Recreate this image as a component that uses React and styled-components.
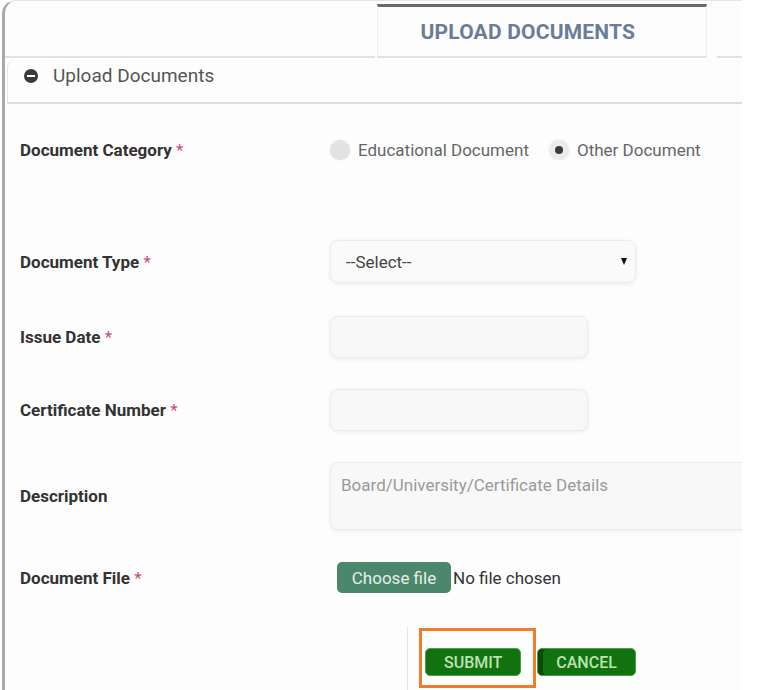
import React from 'react';
import styled, { createGlobalStyle } from 'styled-components';

const GlobalStyle = createGlobalStyle`
  html, body {
    margin: 0;
    padding: 0;
    background: #fff;
    font-family: Roboto, "Liberation Sans", Arial, sans-serif;
  }
`;

const App = () => {
    return (
        <>
            <GlobalStyle />
            <Frame>
                <TopBar>
                    <Gap $w={371} />
                    <Tab>UPLOAD DOCUMENTS</Tab>
                    <Gap $w={25} $ml={10} />
                </TopBar>
                <PanelHeader>
                    <MinusIcon />
                    <span>Upload Documents</span>
                </PanelHeader>
                <Form>
                    <Row $mt={21} $h={50}>
                        <Label>Document Category <Star>*</Star></Label>
                        <Radios>
                            <RadioOption>
                                <Radio />
                                Educational Document
                            </RadioOption>
                            <RadioOption>
                                <Radio $checked />
                                Other Document
                            </RadioOption>
                        </Radios>
                    </Row>
                    <Row $mt={65} $h={43}>
                        <Label>Document Type <Star>*</Star></Label>
                        <SelectBox>
                            <span>--Select--</span>
                            <Caret />
                        </SelectBox>
                    </Row>
                    <Row $mt={33} $h={42}>
                        <Label>Issue Date <Star>*</Star></Label>
                        <Input />
                    </Row>
                    <Row $mt={31} $h={42}>
                        <Label>Certificate Number <Star>*</Star></Label>
                        <Input />
                    </Row>
                    <Row $mt={31} $h={68}>
                        <Label>Description</Label>
                        <TextArea placeholder="Board/University/Certificate Details" />
                    </Row>
                    <Row $mt={32} $h={31}>
                        <Label>Document File <Star>*</Star></Label>
                        <FileField>
                            <ChooseButton>Choose file</ChooseButton>
                            <span>No file chosen</span>
                        </FileField>
                    </Row>
                    <Row $mt={34} $h={70}>
                        <span />
                        <ButtonArea>
                            <Highlight>
                                <ActionButton>SUBMIT</ActionButton>
                            </Highlight>
                            <ActionButton $edge>CANCEL</ActionButton>
                        </ButtonArea>
                    </Row>
                </Form>
            </Frame>
        </>
    );
};

export default App;

// outer card
const Frame = styled.div`
    margin-left: 2px;
    width: 740px;
    height: 690px;
    box-sizing: border-box;
    border-left: 3px solid #a9a9a9;
    border-top: 1px solid #e6e6e6;
    border-top-left-radius: 14px;
    background: #fdfdfd;
    overflow: hidden;
`;

const TopBar = styled.div`
    display: flex;
    height: 57px;
`;

const Gap = styled.div`
    width: ${p => p.$w}px;
    margin-left: ${p => p.$ml || 0}px;
    border-bottom: 2px solid #e1e1e1;
`;

const Tab = styled.div`
    margin-left: 2px;
    margin-top: 3px;
    width: 330px;
    box-sizing: border-box;
    padding-left: 42px;
    display: flex;
    align-items: center;
    border-top: 3px solid #6a6a6a;
    border-left: 1px solid #efefef;
    border-right: 1px solid #efefef;
    border-bottom: 2px solid #e1e1e1;
    color: #6b7c98;
    font-size: 21px;
    font-weight: 700;
    letter-spacing: 0.2px;
`;

const PanelHeader = styled.div`
    margin-left: 2px;
    margin-top: 2px;
    height: 44px;
    box-sizing: border-box;
    display: flex;
    align-items: flex-start;
    gap: 15px;
    padding: 5px 0 0 16px;
    border-left: 1px solid #e4e4e4;
    border-top-left-radius: 8px;
    border-bottom: 2px solid #dcdcdc;
    color: #555;
    font-size: 19px;
    line-height: 22px;
`;

const MinusIcon = styled.span`
    position: relative;
    margin-top: 4px;
    width: 14px;
    height: 14px;
    border-radius: 50%;
    background: #3a3a3a;
    &::after {
        content: '';
        position: absolute;
        left: 3px;
        right: 3px;
        top: 6px;
        height: 2px;
        background: #fff;
    }
`;

const Form = styled.div`
    padding-left: 15px;
`;

const Row = styled.div`
    display: grid;
    grid-template-columns: 310px 1fr;
    align-items: center;
    margin-top: ${p => p.$mt}px;
    height: ${p => p.$h}px;
`;

const Label = styled.div`
    color: #333;
    font-size: 17px;
    font-weight: 700;
`;

const Star = styled.span`
    color: #d2486a;
    font-weight: 400;
`;

const Radios = styled.div`
    display: flex;
    align-items: center;
    gap: 20px;
    color: #666;
    font-size: 17px;
`;

const RadioOption = styled.label`
    display: flex;
    align-items: center;
    gap: 8px;
`;

const Radio = styled.span`
    position: relative;
    width: 20px;
    height: 20px;
    border-radius: 50%;
    background: ${p => p.$checked ? '#ececec' : '#e2e2e2'};
    box-shadow: 0 0 2px rgba(0, 0, 0, 0.12);
    &::after {
        content: '';
        display: ${p => p.$checked ? 'block' : 'none'};
        position: absolute;
        left: 6px;
        top: 6px;
        width: 8px;
        height: 8px;
        border-radius: 50%;
        background: #3c3c3c;
    }
`;

const fieldBase = `
    box-sizing: border-box;
    background: #f8f8f8;
    border: 1px solid #ececec;
    border-radius: 8px;
    box-shadow: 0 1px 4px rgba(0, 0, 0, 0.07);
`;

const SelectBox = styled.div`
    ${fieldBase}
    width: 306px;
    height: 43px;
    display: flex;
    align-items: center;
    justify-content: space-between;
    padding: 0 8px 0 15px;
    background: #fafafa;
    color: #444;
    font-size: 17px;
`;

const Caret = styled.span`
    width: 0;
    height: 0;
    border-left: 3.5px solid transparent;
    border-right: 3.5px solid transparent;
    border-top: 7px solid #111;
`;

const Input = styled.input`
    ${fieldBase}
    width: 258px;
    height: 42px;
    outline: none;
`;

const TextArea = styled.textarea`
    ${fieldBase}
    width: 430px;
    height: 68px;
    resize: none;
    padding: 12px 10px;
    font-family: Roboto, "Liberation Sans", Arial, sans-serif;
    font-size: 17px;
    outline: none;
    &::placeholder {
        color: #9a9a9a;
    }
`;

const FileField = styled.div`
    display: flex;
    align-items: center;
    gap: 2px;
    padding-left: 7px;
    color: #333;
    font-size: 17px;
`;

const ChooseButton = styled.span`
    display: flex;
    align-items: center;
    justify-content: center;
    width: 114px;
    height: 31px;
    border-radius: 5px;
    background: #4b876a;
    color: #e6f0e9;
    font-size: 17px;
`;

const ButtonArea = styled.div`
    display: flex;
    align-items: center;
    gap: 16px;
    height: 70px;
    margin-left: 77px;
    padding-left: 17px;
    border-left: 1px solid #f2dede;
`;

const Highlight = styled.span`
    position: relative;
    display: flex;
    &::after {
        content: '';
        position: absolute;
        top: -20px;
        left: -6px;
        right: -15px;
        bottom: -12px;
        border: 3px solid #f07d2a;
    }
`;

const ActionButton = styled.button`
    height: 28px;
    padding: 0 18px;
    border: 1px solid #4aa14a;
    border-radius: 5px;
    background: #11720f;
    box-shadow: ${p => p.$edge ? 'inset 5px 0 0 #0a4a0a' : 'none'};
    color: #b9e3b3;
    font-family: Roboto, "Liberation Sans", Arial, sans-serif;
    font-size: 16px;
    font-weight: 500;
`;
